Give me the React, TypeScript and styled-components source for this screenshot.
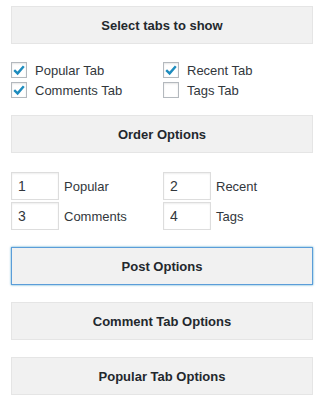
import React from "react";
import styled, { createGlobalStyle, css } from "styled-components";

const Global = createGlobalStyle`
  html, body { margin: 0; padding: 0; background: #fff; }
  body { font-family: "Liberation Sans", Arial, Helvetica, sans-serif; color: #32373c; }
`;

const Panel = styled.div`
  width: 302px;
  padding: 6px 0 0 11px;
  display: flex;
  flex-direction: column;
`;

const SectionHeader = styled.div<{ $active?: boolean; $after: number }>`
  box-sizing: border-box;
  height: 38px;
  display: flex;
  align-items: center;
  justify-content: center;
  background: #f1f1f1;
  border: 1px solid #e5e5e5;
  font-size: 13px;
  font-weight: 700;
  color: #23282d;
  margin-bottom: ${(p) => p.$after}px;
  ${(p) =>
    p.$active &&
    css`
      border-color: #5b9dd9;
      box-shadow: 0 0 2px rgba(30, 140, 190, 0.8);
    `}
`;

const Grid = styled.div<{ $rowGap: number; $after: number }>`
  display: grid;
  grid-template-columns: 152px 150px;
  row-gap: ${(p) => p.$rowGap}px;
  margin-bottom: ${(p) => p.$after}px;
`;

const CheckItem = styled.label`
  display: flex;
  align-items: center;
  gap: 8px;
  height: 16px;
  font-size: 13px;
  color: #32373c;
`;

const Box = styled.span`
  box-sizing: border-box;
  width: 16px;
  height: 16px;
  border: 1px solid #b4b9be;
  background: #fff;
  box-shadow: inset 0 1px 2px rgba(0, 0, 0, 0.1);
  display: flex;
  align-items: center;
  justify-content: center;
`;

const OrderItem = styled.div`
  display: flex;
  align-items: center;
  gap: 5px;
  font-size: 13px;
  color: #32373c;
`;

const NumInput = styled.input`
  box-sizing: border-box;
  width: 48px;
  height: 28px;
  border: 1px solid #ddd;
  box-shadow: inset 0 1px 2px rgba(0, 0, 0, 0.07);
  padding: 0 6px;
  font-family: "Liberation Sans", Arial, sans-serif;
  font-size: 14px;
  color: #32373c;
  outline: none;
  margin: 0;
`;

const Check = () => (
  <svg width="14" height="14" viewBox="0 0 14 14">
    <path d="M2.2 7.2 L5.6 10.4 L11.8 3.2" fill="none" stroke="#1e8cbe" strokeWidth="2.4" />
  </svg>
);

const CheckBox = ({ checked, label }: { checked: boolean; label: string }) => (
  <CheckItem>
    <Box>{checked && <Check />}</Box>
    {label}
  </CheckItem>
);

const Order = ({ value, label }: { value: string; label: string }) => (
  <OrderItem>
    <NumInput defaultValue={value} />
    {label}
  </OrderItem>
);

export default function App() {
  return (
    <>
      <Global />
      <Panel>
        <SectionHeader $after={18}>Select tabs to show</SectionHeader>
        <Grid $rowGap={4} $after={17}>
          <CheckBox checked label="Popular Tab" />
          <CheckBox checked label="Recent Tab" />
          <CheckBox checked label="Comments Tab" />
          <CheckBox checked={false} label="Tags Tab" />
        </Grid>
        <SectionHeader $after={19}>Order Options</SectionHeader>
        <Grid $rowGap={2} $after={17}>
          <Order value="1" label="Popular" />
          <Order value="2" label="Recent" />
          <Order value="3" label="Comments" />
          <Order value="4" label="Tags" />
        </Grid>
        <SectionHeader $active $after={17}>Post Options</SectionHeader>
        <SectionHeader $after={17}>Comment Tab Options</SectionHeader>
        <SectionHeader $after={0}>Popular Tab Options</SectionHeader>
      </Panel>
    </>
  );
}
